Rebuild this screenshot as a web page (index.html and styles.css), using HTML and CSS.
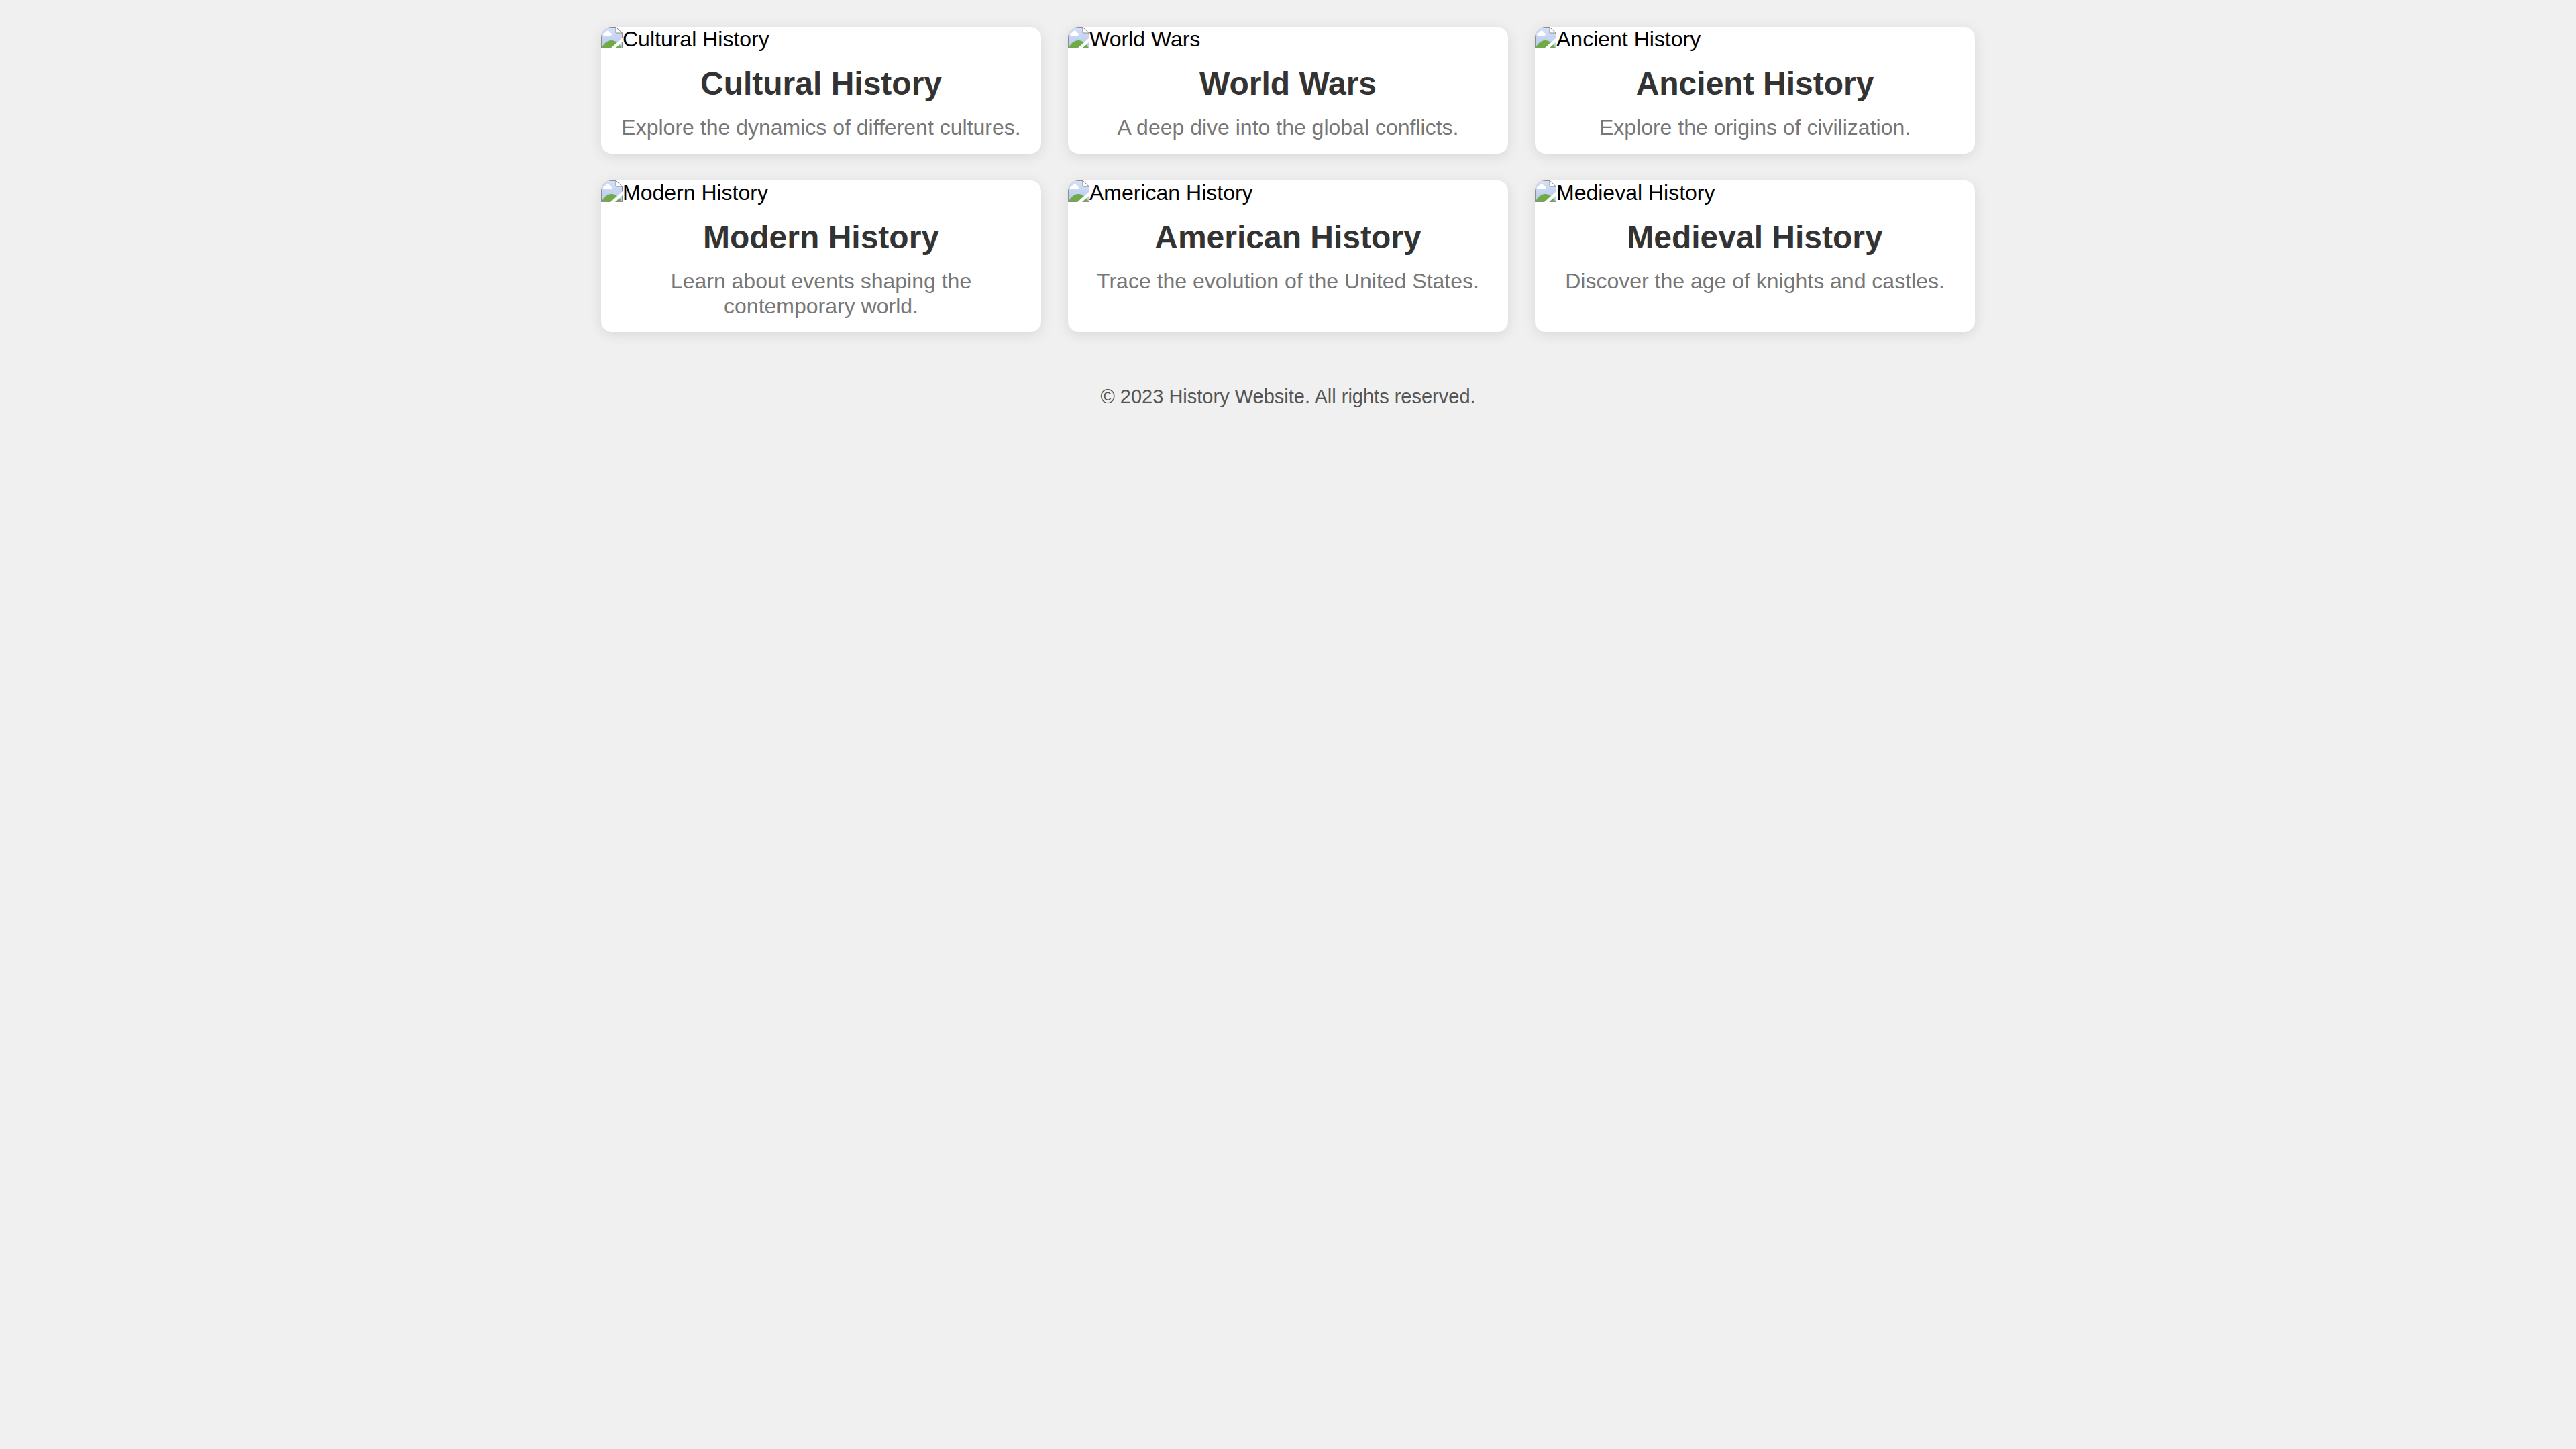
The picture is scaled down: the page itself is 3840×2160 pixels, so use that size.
FILE: index.html
```html
<!DOCTYPE html>
<html lang="en">
<head>
<meta charset="utf-8">
<meta name="viewport" content="width=device-width, initial-scale=1">
<title>History Website</title>
<link rel="stylesheet" href="styles.css">
</head>
<body>
<svg class="defs" width="0" height="0" aria-hidden="true">
  <defs>
    <linearGradient id="sky" x1="0" y1="0" x2="0" y2="1">
      <stop offset="0" stop-color="#d3e0f8"/>
      <stop offset="1" stop-color="#b9c9ee"/>
    </linearGradient>
    <symbol id="picture" viewBox="0 0 32 32">
      <path d="M0 0H22L32 10V32H0Z" fill="#8d8d8d"/>
      <path d="M1 1H22L31 10V31H1Z" fill="url(#sky)"/>
      <path d="M22 1L31 9H22Z" fill="#fff"/>
      <path d="M22 0V9H32" fill="none" stroke="#8d8d8d"/>
      <path d="M22 0L32 9.500" fill="none" stroke="#8d8d8d"/>
      <path d="M5 13C3.500 13 3 11.800 3 11C3 9.500 4.500 8.500 6 8.800C6.500 6.800 8 5.700 10 5.700C12 5.700 13.500 7 13.800 8.800C15.500 9 16 10 16 11C16 12 15.200 13 14 13Z" fill="#fff"/>
      <path d="M1 31C4 25 9 20 15.500 20C22 20 27 25 30.500 31Z" fill="#6fab46"/>
      <path d="M32 16L14 32H21L32 22Z" fill="#fff"/>
    </symbol>
  </defs>
</svg>
<main class="grid">
  <article class="card">
    <div class="picture"><svg class="icon" aria-hidden="true"><use href="#picture"/></svg><span>Cultural History</span></div>
    <h2>Cultural History</h2>
    <p>Explore the dynamics of different cultures.</p>
  </article>
  <article class="card">
    <div class="picture"><svg class="icon" aria-hidden="true"><use href="#picture"/></svg><span>World Wars</span></div>
    <h2>World Wars</h2>
    <p>A deep dive into the global conflicts.</p>
  </article>
  <article class="card">
    <div class="picture"><svg class="icon" aria-hidden="true"><use href="#picture"/></svg><span>Ancient History</span></div>
    <h2>Ancient History</h2>
    <p>Explore the origins of civilization.</p>
  </article>
  <article class="card">
    <div class="picture"><svg class="icon" aria-hidden="true"><use href="#picture"/></svg><span>Modern History</span></div>
    <h2>Modern History</h2>
    <p>Learn about events shaping the contemporary world.</p>
  </article>
  <article class="card">
    <div class="picture"><svg class="icon" aria-hidden="true"><use href="#picture"/></svg><span>American History</span></div>
    <h2>American History</h2>
    <p>Trace the evolution of the United States.</p>
  </article>
  <article class="card">
    <div class="picture"><svg class="icon" aria-hidden="true"><use href="#picture"/></svg><span>Medieval History</span></div>
    <h2>Medieval History</h2>
    <p>Discover the age of knights and castles.</p>
  </article>
</main>
<footer class="footer">© 2023 History Website. All rights reserved.</footer>
</body>
</html>
```
FILE: styles.css
```css
* {
  box-sizing: border-box;
  margin: 0;
  padding: 0;
}

body {
  background: #f0f0f0;
  color: #000;
  font-family: "Liberation Sans", Arial, sans-serif;
  font-size: 32px;
  line-height: 37px;
}

.defs {
  position: absolute;
}

.grid {
  display: grid;
  grid-template-columns: repeat(auto-fit, minmax(500px, 1fr));
  gap: 40px;
  max-width: 2128px;
  margin: 0 auto;
  padding: 40px;
}

.card {
  overflow: hidden;
  border-radius: 16px;
  background: #fff;
  box-shadow: 0 4px 20px rgba(0, 0, 0, 0.1);
  text-align: center;
}

.picture {
  display: flex;
  align-items: flex-start;
}

.icon {
  flex: none;
  width: 32px;
  height: 32px;
}

.card h2 {
  margin: 20px 0;
  color: #333;
  font-size: 48px;
  line-height: 55px;
}

.card p {
  padding: 0 20px 20px;
  color: #777;
}

.footer {
  padding: 40px;
  color: #555;
  font-size: 29px;
  line-height: 32px;
  text-align: center;
}
```
